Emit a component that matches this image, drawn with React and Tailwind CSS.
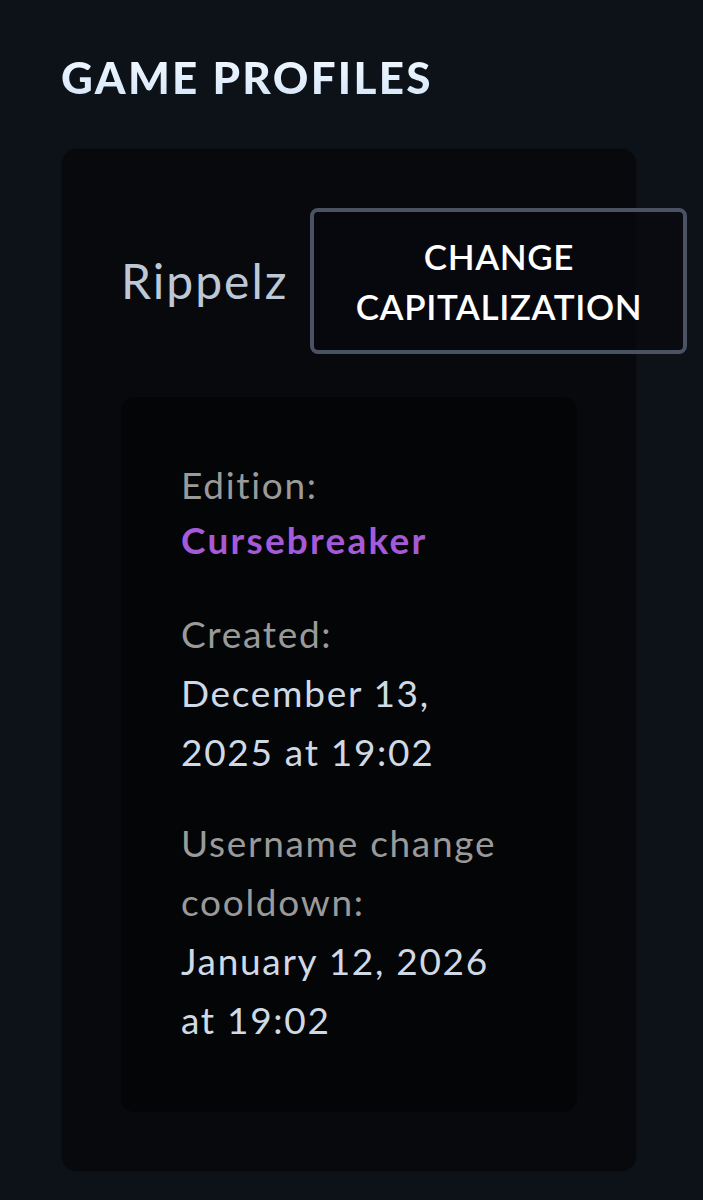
export default function App() {
  return (
    <div className="min-h-[1200px] w-full bg-[#0d1118] pl-[61px] pt-[55px] font-['Lato','Noto_Sans',sans-serif] overflow-hidden">
      <h1 className="text-[44px] leading-[44px] font-black tracking-[2.3px] uppercase bg-gradient-to-b from-[#f3f8ff] to-[#d5e7fa] bg-clip-text text-transparent w-fit">
        Game Profiles
      </h1>
      <div className="mt-[49px] w-[576px] rounded-[16px] bg-[#07090d] border border-[#ffffff06] p-[59px]">
        <div className="flex items-center gap-[22px]">
          <span className="text-[48px] leading-none tracking-[2px] text-[#bdc8d6] shrink-0">Rippelz</span>
          <button className="shrink-0 w-[377px] h-[146px] rounded-[8px] border-[4px] border-[#4b5264] bg-[#07090d]/60 text-white text-[35px] leading-[50px] font-semibold tracking-[0.6px] uppercase text-center">
            Change
            <br />
            Capitalization
          </button>
        </div>
        <div className="mt-[43px] rounded-[14px] bg-[#040506] px-[60px] pt-[58px] pb-[63px] text-[37px] leading-[59px] tracking-[1.7px]">
          <div>
            <div className="text-[#9a9a9a]">Edition:</div>
            <div className="-mt-[4px] text-[#a55ad9] font-bold tracking-[2.2px]">Cursebreaker</div>
          </div>
          <div className="mt-[35px]">
            <div className="text-[#9a9a9a]">Created:</div>
            <div className="text-[#cfdae6]">December 13, 2025 at 19:02</div>
          </div>
          <div className="mt-[32px]">
            <div className="text-[#9a9a9a]">Username change cooldown:</div>
            <div className="text-[#cfdae6]">January 12, 2026 at 19:02</div>
          </div>
        </div>
      </div>
    </div>
  );
}
